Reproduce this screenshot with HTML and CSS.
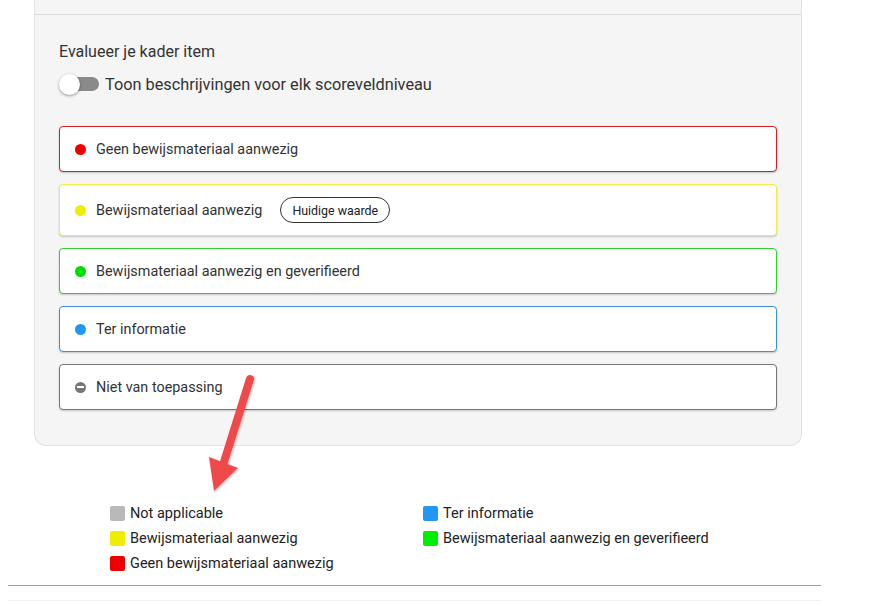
FILE: index.html
```html
<!DOCTYPE html>
<html lang="nl">
<head>
<meta charset="utf-8">
<title>Evalueer</title>
<link rel="stylesheet" href="styles.css">
</head>
<body>
<div class="page">
  <section class="panel">
    <div class="panel-head"></div>
    <div class="panel-body">
      <div class="title">Evalueer je kader item</div>
      <label class="toggle-row">
        <span class="toggle"><span class="track"></span><span class="thumb"></span></span>
        <span class="toggle-label">Toon beschrijvingen voor elk scoreveldniveau</span>
      </label>
      <div class="options">
        <div class="option red"><span class="dot"></span><span>Geen bewijsmateriaal aanwezig</span></div>
        <div class="option yellow tall"><span class="dot"></span><span>Bewijsmateriaal aanwezig</span><span class="badge">Huidige waarde</span></div>
        <div class="option green"><span class="dot"></span><span>Bewijsmateriaal aanwezig en geverifieerd</span></div>
        <div class="option blue"><span class="dot"></span><span>Ter informatie</span></div>
        <div class="option grey"><span class="dot minus"></span><span>Niet van toepassing</span></div>
      </div>
    </div>
  </section>

  <div class="legend">
    <div class="legend-item"><span class="sq sq-grey"></span>Not applicable</div>
    <div class="legend-item"><span class="sq sq-blue"></span>Ter informatie</div>
    <div class="legend-item"><span class="sq sq-yellow"></span>Bewijsmateriaal aanwezig</div>
    <div class="legend-item"><span class="sq sq-green"></span>Bewijsmateriaal aanwezig en geverifieerd</div>
    <div class="legend-item"><span class="sq sq-red"></span>Geen bewijsmateriaal aanwezig</div>
  </div>
  <div class="rule"></div>
  <div class="rule2"></div>

  <svg class="arrow" width="883" height="606" viewBox="0 0 883 606">
    <defs>
      <filter id="sh" x="-20%" y="-20%" width="140%" height="140%">
        <feDropShadow dx="1" dy="1" stdDeviation="1.2" flood-color="#000" flood-opacity="0.25"/>
      </filter>
    </defs>
    <g filter="url(#sh)">
      <line x1="250" y1="379" x2="224" y2="462" stroke="#f04a4c" stroke-width="8" stroke-linecap="round"/>
      <polygon points="209,457 238,468 214,491" fill="#f04a4c"/>
    </g>
  </svg>
</div>
</body>
</html>
```

FILE: styles.css
```css
* { box-sizing: border-box; }
html, body { margin: 0; padding: 0; background: #fff; }
body {
  font-family: Roboto, "Liberation Sans", Arial, sans-serif;
  color: #222;
  width: 883px;
  height: 606px;
  overflow: hidden;
}
.page { position: relative; width: 883px; height: 606px; }

.panel {
  margin-left: 34px;
  width: 768px;
  background: #f5f5f5;
  border: 1px solid #e2e2e2;
  border-top: none;
  border-radius: 0 0 12px 12px;
}
.panel-head {
  height: 15px;
  border-bottom: 1px solid #dcdcdc;
}
.panel-body {
  padding: 27px 24px 35px 24px;
}
.title {
  font-size: 16px;
  line-height: 20px;
  color: #333;
}
.toggle-row {
  display: flex;
  align-items: center;
  gap: 6px;
  margin-top: 12px;
  height: 20px;
}
.toggle {
  position: relative;
  width: 40px;
  height: 21px;
  display: inline-block;
}
.track {
  position: absolute;
  left: 4px;
  top: 3px;
  width: 36px;
  height: 14px;
  border-radius: 7px;
  background: #8a8a8a;
}
.thumb {
  position: absolute;
  left: 0;
  top: 0;
  width: 21px;
  height: 21px;
  border-radius: 50%;
  background: #fff;
  box-shadow: 0 1px 3px rgba(0,0,0,0.4);
}
.toggle-label {
  font-size: 16.3px;
  color: #333;
}

.options {
  margin-top: 32px;
  display: flex;
  flex-direction: column;
  gap: 12px;
}
.option {
  height: 46px;
  background: #fff;
  border: 1px solid #999;
  border-radius: 4px;
  display: flex;
  align-items: center;
  padding-left: 15px;
  font-size: 14.4px;
  color: #333;
  box-shadow: 0 1px 2px rgba(0,0,0,0.2);
}
.option.tall { height: 52px; }
.dot {
  width: 11px;
  height: 11px;
  border-radius: 50%;
  margin-right: 10px;
  flex: none;
}
.red { border-color: #d21f1f; }
.red .dot { background: #ee0000; }
.yellow { border-color: #eeee44; }
.yellow .dot { background: #eeee00; }
.green { border-color: #33cc33; }
.green .dot { background: #00dd00; }
.blue { border-color: #3b90d8; }
.blue .dot { background: #2196f3; }
.grey { border-color: #777; }
.dot.minus {
  background: #777;
  position: relative;
}
.dot.minus::after {
  content: "";
  position: absolute;
  left: 2px;
  top: 4.5px;
  width: 7px;
  height: 2px;
  background: #fff;
}
.badge {
  margin-left: 18px;
  height: 26px;
  padding: 0 11px;
  border: 1px solid #333;
  border-radius: 13px;
  font-size: 12.4px;
  display: inline-flex;
  align-items: center;
  color: #222;
}

.legend {
  margin-top: 58px;
  margin-left: 110px;
  display: grid;
  grid-template-columns: 313px auto;
  row-gap: 6px;
}
.legend-item {
  display: flex;
  align-items: center;
  font-size: 14.5px;
  line-height: 19px;
  color: #222;
}
.sq {
  width: 15px;
  height: 15px;
  border-radius: 2px;
  margin-right: 5px;
  flex: none;
}
.sq-grey { background: #b9b9b9; }
.sq-blue { background: #2196f3; }
.sq-yellow { background: #eeee00; }
.sq-green { background: #00ee00; }
.sq-red { background: #ee0000; }

.rule {
  margin-top: 12px;
  margin-left: 8px;
  width: 813px;
  height: 1px;
  background: #a0a0a0;
}
.rule2 {
  margin-top: 14px;
  margin-left: 8px;
  width: 813px;
  height: 1px;
  background: #f0f0f0;
}

.arrow {
  position: absolute;
  left: 0;
  top: 0;
  pointer-events: none;
}
```
